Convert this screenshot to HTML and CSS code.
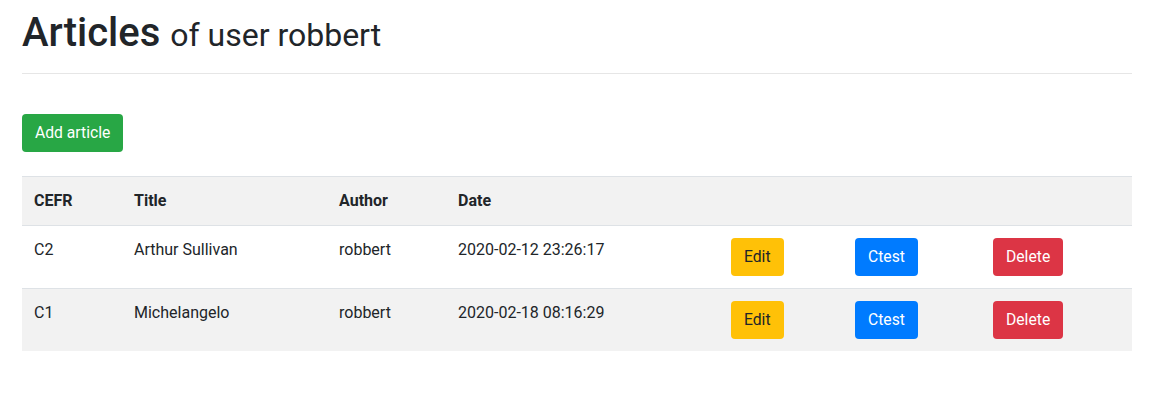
FILE: index.html
```html
<!DOCTYPE html>
<html lang="en">
<head>
    <meta charset="UTF-8">
    <meta name="viewport" content="width=device-width, initial-scale=1.0">
    <title>Articles</title>
    <link rel="stylesheet" href="styles.css">
</head>
<body>

<div class="container">
    <h1 class="page-title">Articles <small>of user robbert</small></h1>

    <a href="#" class="btn btn-success add-button">Add article</a>

    <table class="table">
        <colgroup>
            <col style="width: 100px">
            <col style="width: 205px">
            <col style="width: 119px">
            <col style="width: 273px">
            <col style="width: 124px">
            <col style="width: 138px">
            <col>
        </colgroup>
        <thead>
            <tr>
                <th>CEFR</th>
                <th>Title</th>
                <th>Author</th>
                <th>Date</th>
                <th></th>
                <th></th>
                <th></th>
            </tr>
        </thead>
        <tbody>
            <tr>
                <td>C2</td>
                <td>Arthur Sullivan</td>
                <td>robbert</td>
                <td>2020-02-12 23:26:17</td>
                <td><a href="#" class="btn btn-warning">Edit</a></td>
                <td><a href="#" class="btn btn-primary">Ctest</a></td>
                <td><a href="#" class="btn btn-danger">Delete</a></td>
            </tr>
            <tr class="striped">
                <td>C1</td>
                <td>Michelangelo</td>
                <td>robbert</td>
                <td>2020-02-18 08:16:29</td>
                <td><a href="#" class="btn btn-warning">Edit</a></td>
                <td><a href="#" class="btn btn-primary">Ctest</a></td>
                <td><a href="#" class="btn btn-danger">Delete</a></td>
            </tr>
        </tbody>
    </table>
</div>

</body>
</html>
```

FILE: styles.css
```css
/* General Reset */
* {
    margin: 0;
    padding: 0;
    box-sizing: border-box;
}

body {
    font-family: Roboto, "Liberation Sans", sans-serif;
    font-size: 16px;
    line-height: 1.5;
    color: #212529;
    background-color: #fff;
}

/* Page container */
.container {
    width: 1110px;
    margin-left: 22px;
}

/* Heading */
.page-title {
    font-size: 40px;
    font-weight: 500;
    line-height: 48px;
    height: 74px;
    padding-top: 9px;
    border-bottom: 1px solid #e6e6e6;
    margin-bottom: 40px;
}

.page-title small {
    font-size: 32px;
    font-weight: 400;
}

/* Buttons */
.btn {
    display: inline-block;
    padding: 6px 12px;
    font-size: 15.7px;
    line-height: 24px;
    border: 1px solid transparent;
    border-radius: 4px;
    text-decoration: none;
    color: #fff;
}

.btn-success {
    background-color: #28a745;
}

.btn-warning {
    background-color: #ffc107;
    color: #212529;
}

.btn-primary {
    background-color: #007bff;
}

.btn-danger {
    background-color: #dc3545;
}

.add-button {
    margin-bottom: 24px;
}

/* Table */
.table {
    width: 100%;
    border-collapse: collapse;
    table-layout: fixed;
}

.table th,
.table td {
    padding: 12px;
    text-align: left;
    vertical-align: top;
    border-top: 1px solid #dee2e6;
}

.table th {
    font-weight: 700;
}

.table thead tr,
.table tr.striped {
    background-color: #f2f2f2;
}
```
